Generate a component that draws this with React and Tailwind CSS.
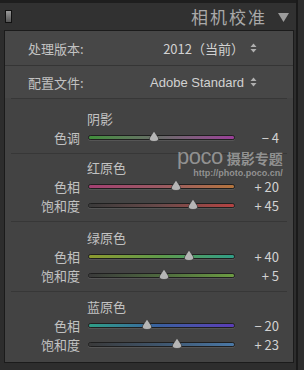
import React from 'react'

const font = { fontFamily: '"Noto Sans CJK SC", "Noto Sans", sans-serif' }

const sections = [
  {
    title: '阴影',
    pad: 'pt-[10px] pb-[6px]',
    rows: [
      { label: '色调', value: '− 4', pos: 45, track: 'bg-gradient-to-r from-[#3f8f3a] via-[#6a6a6a] to-[#9a3d98]' },
    ],
  },
  {
    title: '红原色',
    pad: 'pt-[4px] pb-[6px]',
    rows: [
      { label: '色相', value: '+ 20', pos: 60, track: 'bg-gradient-to-r from-[#a43f72] via-[#9a5a62] to-[#b4743c]' },
      { label: '饱和度', value: '+ 45', pos: 72, track: 'bg-gradient-to-r from-[#3a3a3a] via-[#6a4a4a] to-[#b54242]' },
    ],
  },
  {
    title: '绿原色',
    pad: 'pt-[6px] pb-[6px]',
    rows: [
      { label: '色相', value: '+ 40', pos: 69, track: 'bg-gradient-to-r from-[#8c9a2e] via-[#5e9a4a] to-[#2e9e86]' },
      { label: '饱和度', value: '+ 5', pos: 52, track: 'bg-gradient-to-r from-[#3a3a3a] via-[#4e6a3e] to-[#6c9c42]' },
    ],
  },
  {
    title: '蓝原色',
    pad: 'pt-[5px] pb-[5px]',
    rows: [
      { label: '色相', value: '− 20', pos: 40, track: 'bg-gradient-to-r from-[#2e9e86] via-[#3a5ea0] to-[#5a3cb8]' },
      { label: '饱和度', value: '+ 23', pos: 61, track: 'bg-gradient-to-r from-[#3a3a3a] via-[#3f566e] to-[#4a78a6]' },
    ],
  },
]

const Updown = () => (
  <svg width="7" height="10" viewBox="0 0 7 10" className="ml-[6px]">
    <path d="M3.5 0.5 L6.5 4 L0.5 4 Z M3.5 9.5 L6.5 6 L0.5 6 Z" fill="#b0b0b0" />
  </svg>
)

const Slider = ({ label, value, pos, track }) => (
  <div className="flex items-center h-[19px]">
    <div className="w-[75px] text-right text-[13px] leading-none text-[#c2c2c2]">{label}</div>
    <div className="relative w-[147px] h-[5px] ml-[8px] rounded-full border border-[#1f1f1f] shadow-[0_1px_0_#555]">
      <div className={`w-full h-full rounded-full ${track}`} />
      <div className="absolute top-[-5px]" style={{ left: `calc(${pos}% - 5px)` }}>
        <svg width="10" height="11" viewBox="0 0 10 11">
          <path d="M5 0 L9.5 7 Q10 10.5 5 10.5 Q0 10.5 0.5 7 Z" fill="#b5b5b5" stroke="#2a2a2a" strokeWidth="0.6" />
        </svg>
      </div>
    </div>
    <div className="w-[44px] text-right text-[13px] leading-none text-[#d2d2d2]">{value}</div>
  </div>
)

export default function App() {
  return (
    <div className="relative flex w-[304px] h-[370px] overflow-hidden bg-[#2d2d2d]" style={font}>
      <div className="w-[296px]">
        <div className="h-[3px] bg-[#1e1e1e]" />

        {/* header */}
        <div className="flex items-center h-[27px] pl-[5px] pr-[7px] bg-[#313131]">
          <div className="w-[7px] h-[13px] border border-[#111] bg-gradient-to-b from-[#9a9a9a] to-[#555]" />
          <div className="flex-1" />
          <div className="text-[17px] leading-none tracking-[2px] text-[#a9a9a9]">相机校准</div>
          <svg width="11" height="10" viewBox="0 0 11 10" className="ml-[11px]">
            <path d="M0 1 L11 1 L5.5 10 Z" fill="#9c9c9c" />
          </svg>
        </div>

        <div className="flex">
          <div className="w-[4px]" />
          <div className="w-[290px] h-[333px] border border-[#1b1b1b] bg-[#434343]">
            <div className="flex items-center h-[34px] pl-[23px] pr-[36px] bg-[#474747]">
              <div className="text-[13px] leading-none text-[#c2c2c2]">处理版本:</div>
              <div className="flex-1" />
              <div className="text-[13px] leading-none text-[#d2d2d2]">2012（当前）</div>
              <Updown />
            </div>
            <div className="h-px bg-[#353535]" />
            <div className="flex items-center h-[32px] pl-[23px] pr-[36px] bg-[#474747]">
              <div className="text-[13px] leading-none text-[#c2c2c2]">配置文件:</div>
              <div className="flex-1" />
              <div className="text-[13px] leading-none text-[#d2d2d2]" style={{ fontFamily: '"Liberation Sans", sans-serif' }}>Adobe Standard</div>
              <Updown />
            </div>
            {sections.map((s) => (
              <div key={s.title}>
                <div className="h-px bg-[#373737] mx-[6px]" />
                <div className={s.pad}>
                  <div className="flex items-center h-[19px] pl-[82px] text-[13px] leading-none text-[#c2c2c2]">{s.title}</div>
                  {s.rows.map((r) => (
                    <Slider key={r.label} {...r} />
                  ))}
                </div>
              </div>
            ))}
          </div>
        </div>
      </div>
      <div className="w-[2px] h-full bg-[#1a1a1a]" />

      {/* watermark */}
      <div className="absolute left-[177px] top-[146px] flex flex-col items-end text-[#b5b5b5]/70">
        <div className="flex items-baseline">
          <span className="text-[22px] leading-none tracking-[-0.5px]" style={{ fontFamily: '"Liberation Sans", sans-serif' }}>poco</span>
          <span className="ml-[4px] text-[14px] leading-none font-bold">摄影专题</span>
        </div>
        <div className="text-[9px] leading-none font-bold mt-[1px]" style={{ fontFamily: '"Liberation Sans", sans-serif' }}>http://photo.poco.cn/</div>
      </div>
    </div>
  )
}
